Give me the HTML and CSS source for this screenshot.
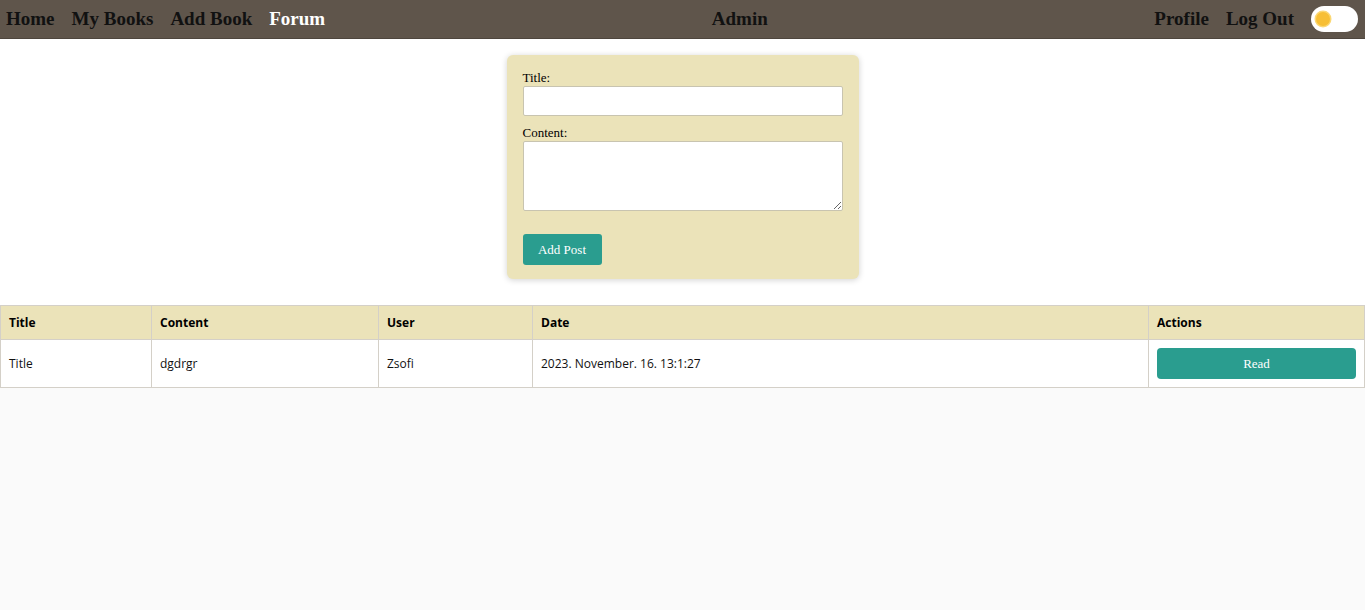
FILE: index.html
```html
<!DOCTYPE html>
<html>
<head>
<meta charset="utf-8">
<link rel="stylesheet" href="styles.css">
</head>
<body>
<nav class="nav">
  <div class="nav-group">
    <a class="nav-link">Home</a>
    <a class="nav-link">My Books</a>
    <a class="nav-link">Add Book</a>
    <a class="nav-link active">Forum</a>
  </div>
  <div class="nav-group"><span class="nav-link">Admin</span></div>
  <div class="nav-group">
    <a class="nav-link">Profile</a>
    <a class="nav-link">Log Out</a>
    <span class="toggle"><span class="sun"></span></span>
  </div>
</nav>
<main class="main">
  <section class="top">
    <form class="card">
      <label class="label">Title:</label>
      <input class="input" type="text">
      <label class="label label-content">Content:</label>
      <textarea class="textarea"></textarea>
      <button type="button" class="btn">Add Post</button>
    </form>
  </section>
  <table class="table">
    <thead>
      <tr>
        <th class="c1">Title</th>
        <th class="c2">Content</th>
        <th class="c3">User</th>
        <th class="c4">Date</th>
        <th class="c5">Actions</th>
      </tr>
    </thead>
    <tbody>
      <tr>
        <td>Title</td>
        <td>dgdrgr</td>
        <td>Zsofi</td>
        <td>2023. November. 16. 13:1:27</td>
        <td><button type="button" class="read">Read</button></td>
      </tr>
    </tbody>
  </table>
</main>
</body>
</html>
```
FILE: styles.css
```css
html, body { margin: 0; padding: 0; }
body {
  background: #fafafa;
  font-family: "Liberation Serif", "Times New Roman", serif;
}
.nav {
  height: 38px;
  background: #5f554b;
  display: flex;
  justify-content: space-between;
  align-items: center;
  padding: 0 7px 0 6px;
  border-bottom: 1px solid #4e463e;
}
.nav-group { display: flex; align-items: center; gap: 17px; }
.nav-link {
  font-weight: bold;
  font-size: 19px;
  color: #111;
  text-decoration: none;
}
.nav-link.active { color: #fff; }
.toggle {
  width: 47px;
  height: 26px;
  background: #fff;
  border-radius: 13px;
  display: flex;
  align-items: center;
  padding-left: 5px;
  box-sizing: border-box;
}
.sun {
  width: 14px;
  height: 14px;
  border-radius: 50%;
  background: #f7bf35;
  box-shadow: 0 0 0 1.5px #fbd874;
}
.top {
  background: #fff;
  display: flex;
  justify-content: center;
  padding: 16px 0 26px;
}
.card {
  width: 352px;
  box-sizing: border-box;
  background: #ebe3b9;
  border-radius: 6px;
  padding: 15px 16px 14px;
  box-shadow: 0 1px 6px rgba(0,0,0,0.18);
  display: flex;
  flex-direction: column;
  align-items: flex-start;
}
.label { font-size: 13px; color: #000; line-height: 16px; }
.label-content { margin-top: 9px; }
.input {
  width: 320px;
  height: 30px;
  box-sizing: border-box;
  border: 1px solid #c8c4b0;
  border-radius: 2px;
  background: #fff;
  margin: 0;
}
.textarea {
  width: 320px;
  height: 70px;
  box-sizing: border-box;
  border: 1px solid #c8c4b0;
  border-radius: 2px;
  background: #fff;
  margin: 0;
  resize: both;
}
.btn {
  margin-top: 23px;
  width: 79px;
  height: 31px;
  border: none;
  border-radius: 3px;
  background: #2a9d8f;
  color: #fff;
  font-family: "Liberation Serif", serif;
  font-size: 13px;
}
.table {
  width: 100%;
  border-collapse: collapse;
  background: #fff;
  font-family: "Open Sans", "Noto Sans", sans-serif;
  font-size: 12px;
  border: 1px solid #d4d0c8;
}
.table th, .table td {
  border: 1px solid #d4d0c8;
  text-align: left;
  padding: 0 8px;
}
.table th {
  background: #ebe3b9;
  height: 33px;
  font-weight: bold;
  color: #000;
}
.table td { height: 47px; color: #111; }
.c1 { width: 134px; }
.c2 { width: 210px; }
.c3 { width: 137px; }
.c4 { width: 599px; }
.read {
  width: 100%;
  height: 31px;
  border: none;
  border-radius: 4px;
  background: #2a9d8f;
  color: #fff;
  font-family: "Liberation Serif", serif;
  font-size: 13px;
  display: block;
}
```
